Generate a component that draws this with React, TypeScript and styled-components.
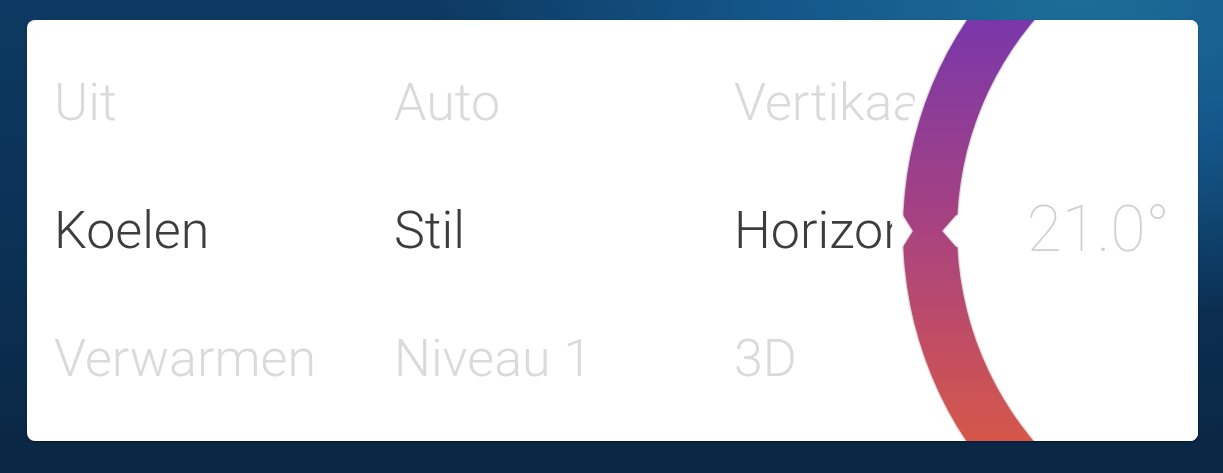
import React from "react";
import styled, { createGlobalStyle } from "styled-components";

const Global = createGlobalStyle`
  html, body { margin: 0; padding: 0; }
  body {
    width: 1223px;
    height: 473px;
    overflow: hidden;
    font-family: Roboto, "Liberation Sans", sans-serif;
    background:
      radial-gradient(ellipse 70% 90% at 88% 0%, #1d6d98 0%, #14578a 35%, rgba(12,54,92,0) 75%),
      linear-gradient(180deg, #0d3a62 0%, #0b2f52 60%, #0a2643 100%);
  }
`;

const Screen = styled.div`
  box-sizing: border-box;
  width: 1223px;
  height: 473px;
  padding: 20px 25px 32px 27px;
`;

const Card = styled.div`
  position: relative;
  display: flex;
  align-items: stretch;
  height: 421px;
  width: 1171px;
  background: #fff;
  border-radius: 8px;
  overflow: hidden;
  padding-left: 27px;
  box-sizing: border-box;
  box-shadow: 0 1px 2px rgba(0, 0, 0, 0.35);
`;

const Column = styled.div<{ $grow?: boolean }>`
  width: 340px;
  display: flex;
  flex-direction: column;
  justify-content: center;
  flex: ${(p) => (p.$grow ? "1 1 0" : "0 0 340px")};
  min-width: 0;
`;

const Item = styled.div<{ $active?: boolean }>`
  height: 128px;
  line-height: 128px;
  font-size: 52px;
  font-weight: 300;
  white-space: nowrap;
  color: ${(p) => (p.$active ? "#3d3d3d" : "#dadada")};
`;

const Dial = styled.div`
  position: absolute;
  left: 865px;
  top: -180px;
  width: 782px;
  height: 782px;
  border-radius: 50%;
  background: #fff;
  z-index: 1;
`;

const Temperature = styled.div`
  position: relative;
  z-index: 2;
  flex-shrink: 0;
  padding-right: 28px;
  align-self: center;
  font-size: 64px;
  font-weight: 100;
  color: #cfcfcf;
  line-height: 1;
  margin-top: -2px;
`;

const columns: { items: string[]; active: number }[] = [
  { items: ["Uit", "Koelen", "Verwarmen"], active: 1 },
  { items: ["Auto", "Stil", "Niveau 1"], active: 1 },
  { items: ["Vertikaal", "Horizontaal", "3D"], active: 1 },
];

function Ring() {
  // dial local coords: center (391, 391), outer r 380, inner r 326
  const cx = 391;
  const cy = 391;
  const R = 380;
  const r = 326;
  const ring = `M ${cx - R} ${cy} A ${R} ${R} 0 1 0 ${cx + R} ${cy} A ${R} ${R} 0 1 0 ${cx - R} ${cy} Z
    M ${cx - r} ${cy} A ${r} ${r} 0 1 0 ${cx + r} ${cy} A ${r} ${r} 0 1 0 ${cx - r} ${cy} Z`;
  const ox = cx - R;
  const ix = cx - r;
  return (
    <svg width="782" height="782" viewBox="0 0 782 782">
      <defs>
        <linearGradient id="ringGrad" gradientUnits="userSpaceOnUse" x1="0" y1="180" x2="0" y2="602">
          <stop offset="0" stopColor="#7937aa" />
          <stop offset="0.5" stopColor="#a9437f" />
          <stop offset="1" stopColor="#d6574a" />
        </linearGradient>
        <filter id="edge" x="-5%" y="-5%" width="110%" height="110%">
          <feDropShadow dx="0" dy="0" stdDeviation="1.2" floodColor="#000" floodOpacity="0.5" />
        </filter>
        <mask id="notch">
          <rect x="0" y="0" width="782" height="782" fill="#fff" />
          <polygon points={`${ox - 6},${cy - 16} ${ox},${cy - 16} ${ox + 10},${cy} ${ox},${cy + 16} ${ox - 6},${cy + 16}`} fill="#000" />
          <polygon points={`${ix + 8},${cy - 16} ${ix - 1},${cy - 16} ${ix - 15},${cy} ${ix - 1},${cy + 16} ${ix + 8},${cy + 16}`} fill="#000" />
        </mask>
      </defs>
      <g filter="url(#edge)">
        <path d={ring} fill="url(#ringGrad)" fillRule="evenodd" mask="url(#notch)" />
      </g>
    </svg>
  );
}

export default function App() {
  return (
    <>
      <Global />
      <Screen>
        <Card>
          {columns.map((col, ci) => (
            <Column key={ci} $grow={ci === columns.length - 1}>
              {col.items.map((label, i) => (
                <Item key={label} $active={i === col.active}>
                  {label}
                </Item>
              ))}
            </Column>
          ))}
          <Dial>
            <Ring />
          </Dial>
          <Temperature>21.0°</Temperature>
        </Card>
      </Screen>
    </>
  );
}
